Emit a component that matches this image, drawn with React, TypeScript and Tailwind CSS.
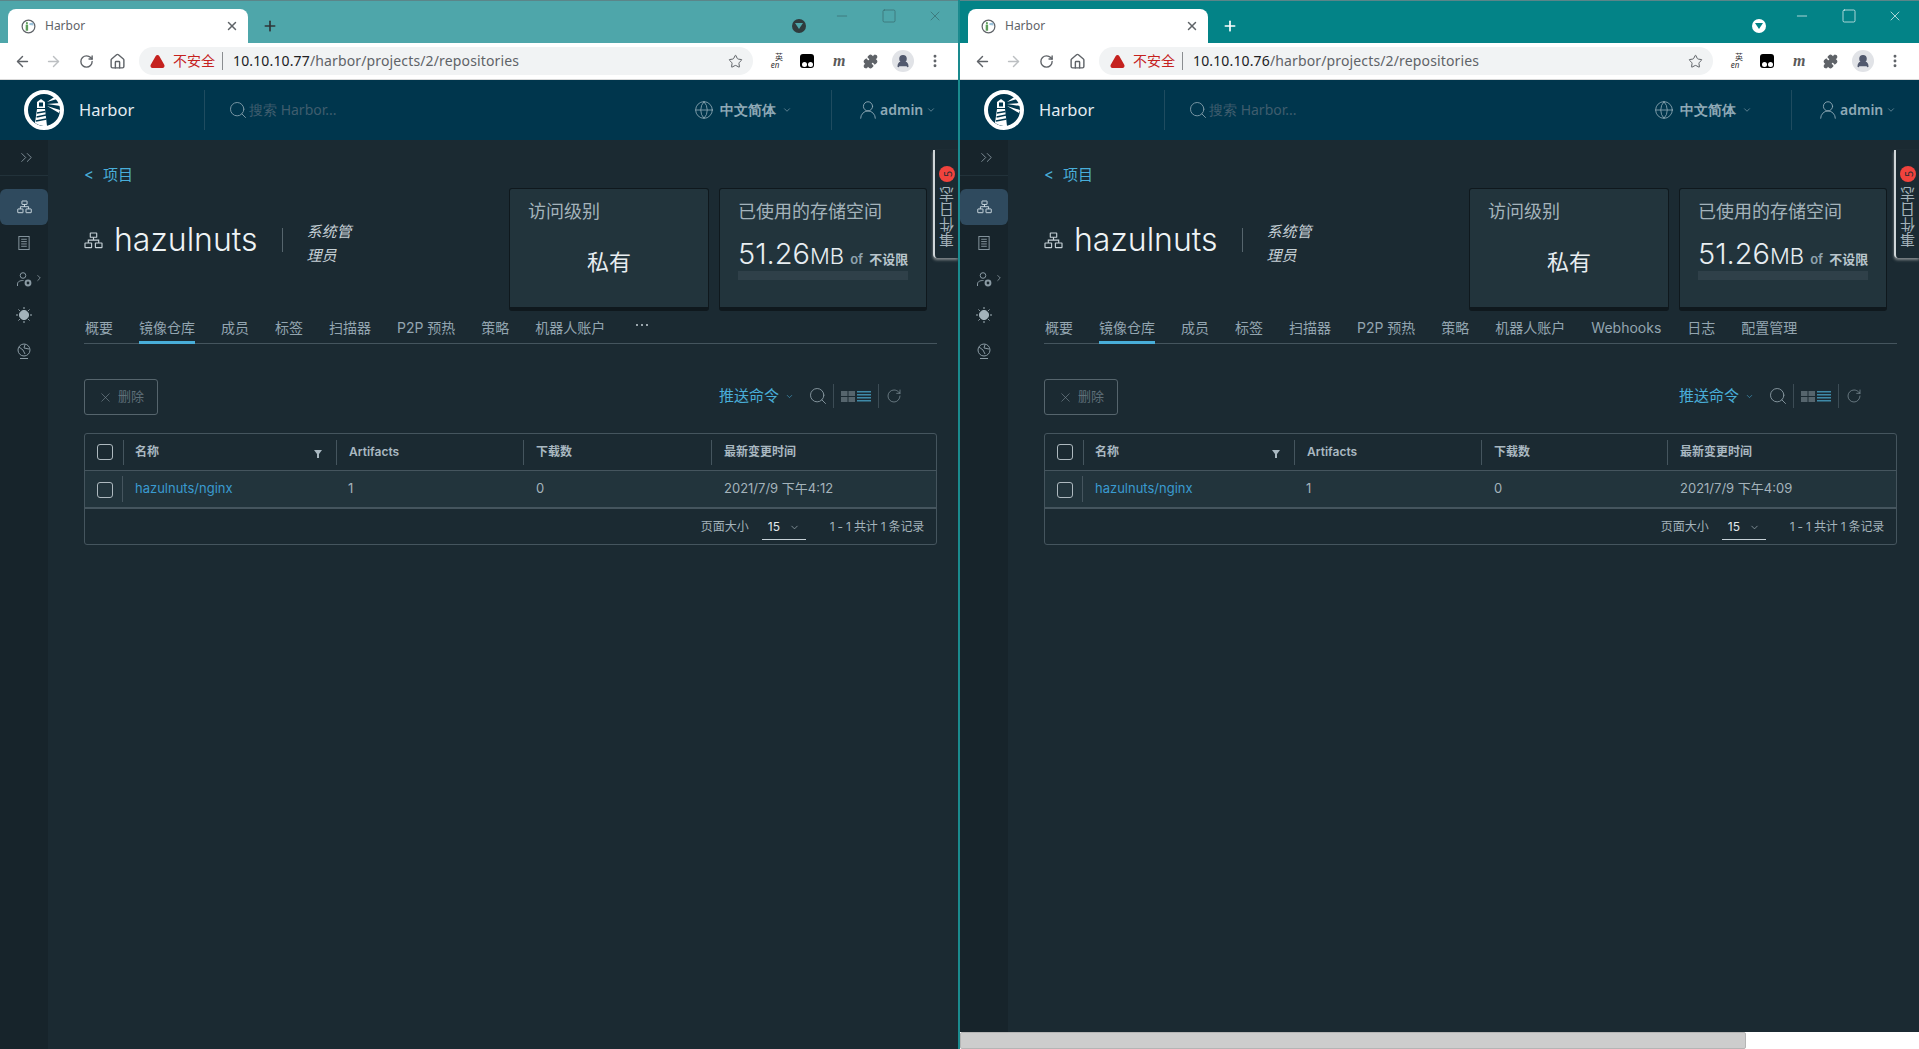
import { ChevronDown, ChevronRight, ChevronsRight, Globe, Minus, Plus, RotateCw, Search, Square, Star, UserRound, X, ArrowLeft, ArrowRight, Home, EllipsisVertical, Puzzle, TriangleAlert } from "lucide-react";

const BASE_TABS = ["概要", "镜像仓库", "成员", "标签", "扫描器", "P2P 预热", "策略", "机器人账户"];

const ProjectIcon = ({ className }: { className: string }) => (
	<svg viewBox="0 0 20 18" fill="none" stroke="currentColor" strokeWidth="1.2" className={className}>
		<rect x="6.6" y="1" width="6.8" height="4.6" rx="0.4" />
		<rect x="1" y="11.6" width="7" height="5" rx="0.4" />
		<rect x="12" y="11.6" width="7" height="5" rx="0.4" />
		<path d="M10 5.6v3M4.5 11.6V8.6h11v3" />
	</svg>
);

const HarborLogo = () => (
	<svg viewBox="0 0 40 40" className="h-10 w-10 shrink-0">
		<circle cx="20" cy="20" r="18" fill="#00364d" stroke="#fff" strokeWidth="4" />
		<path d="M11 33 L13 19 H21 L23 36 A17 17 0 0 1 11 33Z" fill="#fff" />
		<path d="M13 18 V12 L17 9 L21 12 V18Z" fill="#fff" />
		<rect x="15" y="12.5" width="4" height="4" fill="#00364d" />
		<path d="M13 23 L21.5 21.5 M12.6 27 L22 25 M12 31 L22.5 29" stroke="#00364d" strokeWidth="1.3" />
		<path d="M23 12 L31 6.5 L33 9 Z M23 14 L36 13 L36.5 16 Z M23 16 L36 20 L35 23 Z" fill="#fff" />
	</svg>
);

const Favicon = () => (
	<svg viewBox="0 0 16 16" className="h-[15px] w-[15px] shrink-0">
		<circle cx="8" cy="8" r="6.8" fill="#fff" stroke="#5f6368" strokeWidth="1.3" />
		<rect x="5" y="6" width="2.6" height="6.5" fill="#5e9e5a" />
		<circle cx="6.3" cy="4.4" r="1.1" fill="#5e9e5a" />
		<path d="M8.8 4.5 L13 3.6 L13.4 7 L9 6.4Z" fill="#9cc3dc" />
	</svg>
);

type ChromeProps = { ip: string; tint: string; tintIcon: string; controlColor: string; plusColor: string };

function BrowserChrome({ ip, tint, tintIcon, controlColor, plusColor }: ChromeProps) {
	return (
		<div className="shrink-0 font-['Noto_Sans','Noto_Sans_CJK_SC',sans-serif]">
			<div className={`flex h-[43px] items-end border-t border-[#5b8589] pl-2 ${tint}`}>
				<div className="flex h-[34px] w-[240px] items-center rounded-t-lg bg-white pl-[13px] pr-[9px]">
					<Favicon />
					<span className="ml-[9px] flex-1 text-xs text-[#5f6368]">Harbor</span>
					<X size={14} strokeWidth={2.5} className="text-[#5f6368]" />
				</div>
				<div className="mb-[8px] ml-[13px] flex h-[18px] w-[18px] items-center justify-center">
					<Plus size={16} strokeWidth={2.5} className={plusColor} />
				</div>
				<div className="mb-[10px] ml-[513px] flex h-[14px] w-[14px] items-center justify-center rounded-full">
					<div className={`flex h-[14px] w-[14px] items-center justify-center rounded-full ${tintIcon}`}>
						<svg viewBox="0 0 8 6" className="h-[6px] w-[8px]"><path d="M0 0h8L4 6z" fill="currentColor" /></svg>
					</div>
				</div>
				<div className={`mb-[19px] ml-[28px] flex gap-[30px] ${controlColor}`}>
					<Minus size={16} strokeWidth={1} />
					<Square size={16} strokeWidth={1} className="ml-px" />
					<X size={16} strokeWidth={1} />
				</div>
			</div>
			<div className="flex h-[37px] items-center border-b border-[#d9d9d9] bg-white pl-[14px]">
				<ArrowLeft size={17} strokeWidth={2} className="text-[#5f6368]" />
				<ArrowRight size={17} strokeWidth={2} className="ml-[14px] text-[#bcbfc2]" />
				<RotateCw size={15} strokeWidth={2.2} className="ml-[17px] text-[#5f6368]" />
				<Home size={17} strokeWidth={2} className="ml-[15px] text-[#5f6368]" />
				<div className="ml-[13px] flex h-7 w-[614px] items-center rounded-full bg-[#f1f3f4] pl-[11px] pr-[10px]">
					<TriangleAlert size={15} strokeWidth={2.5} className="fill-[#c5221f] text-[#c5221f]" />
					<span className="ml-2 text-sm text-[#c5221f]">不安全</span>
					<span className="ml-[7px] h-[18px] w-px bg-[#8a8d90]" />
					<span className="ml-[10px] flex-1 text-sm tracking-[0.14px] text-[#5f6368]">
						<span className="text-[#202124]">{ip}</span>/harbor/projects/2/repositories
					</span>
					<Star size={15} strokeWidth={1.6} className="text-[#5f6368]" />
				</div>
				<div className="ml-[14px] flex w-[16px] flex-col items-center text-[8px] leading-[8px] text-[#333]">
					<span className="self-end">英</span>
					<span className="italic">en</span>
				</div>
				<div className="ml-[17px] flex h-[14px] w-[14px] items-end justify-center gap-px rounded-[3px] bg-black pb-[1px]">
					<span className="h-[5px] w-[5px] rounded-full bg-white" />
					<span className="h-[5px] w-[5px] rounded-full bg-white" />
				</div>
				<span className="ml-[19px] font-['Liberation_Serif',serif] text-base font-bold italic text-[#5a5a5a]">m</span>
				<Puzzle size={15} className="ml-[18px] fill-[#5f6368] text-[#5f6368]" />
				<div className="ml-[14px] flex h-[22px] w-[22px] items-center justify-center overflow-hidden rounded-full bg-[#e1e3e7]">
					<UserRound size={14} strokeWidth={3} className="fill-[#50586d] text-[#50586d]" />
				</div>
				<EllipsisVertical size={16} strokeWidth={2.4} className="ml-[13px] text-[#5f6368]" />
			</div>
		</div>
	);
}

function Sidebar() {
	return (
		<aside className="flex w-12 shrink-0 flex-col bg-[#17242b] text-[#8a9aa3]">
			<div className="flex h-[36px] items-center justify-center border-b border-[#22323a] pl-[5px]">
				<ChevronsRight size={19} strokeWidth={1.1} />
			</div>
			<div className="mt-[13px] flex h-9 items-center justify-center rounded-md bg-[#2f4a5e] text-[#d6e2e8]">
				<ProjectIcon className="h-[14px] w-[15px]" />
			</div>
			<div className="flex h-9 items-center justify-center">
				<svg viewBox="0 0 12 15" fill="none" stroke="currentColor" className="h-[14px] w-[12px]">
					<rect x="0.5" y="0.5" width="11" height="14" />
					<path d="M3 3.5h6M3 6h6M3 8.5h6M3 11h6" />
				</svg>
			</div>
			<div className="relative flex h-9 items-center justify-center">
				<svg viewBox="0 0 15 15" fill="none" stroke="currentColor" className="h-[15px] w-[15px]">
					<circle cx="6" cy="3.5" r="2.8" />
					<path d="M0.5 14 V12 C0.5 9.5 3 8.5 6.5 8.5" />
					<circle cx="11" cy="11" r="2.4" strokeWidth="2" />
				</svg>
				<ChevronRight size={10} strokeWidth={1.6} className="absolute right-[4px] top-[12px] text-[#a3b2ba]" />
			</div>
			<div className="flex h-9 items-center justify-center">
				<svg viewBox="0 0 16 16" className="h-4 w-4 fill-current stroke-current text-[#a3b2ba]">
					<circle cx="8" cy="8" r="4.6" />
					<path d="M8 0v2M8 14v2M0 8h2M14 8h2M2.5 2.5l1.3 1.3M12.2 12.2l1.3 1.3M2.5 13.5l1.3-1.3M12.2 3.8l1.3-1.3" fill="none" />
				</svg>
			</div>
			<div className="flex h-9 items-center justify-center">
				<svg viewBox="0 0 14 16" fill="none" stroke="currentColor" className="h-4 w-[14px]">
					<circle cx="7" cy="7" r="6" />
					<path d="M2 4l4 3 2 4M8 1.5L7 5l5 1M3 15.5h8" />
				</svg>
			</div>
		</aside>
	);
}

function AppHeader() {
	return (
		<header className="flex h-[60px] shrink-0 items-center bg-[#00364d] pl-6">
			<HarborLogo />
			<span className="ml-[15px] w-[125px] text-[16.5px] text-[#e3edf2]">Harbor</span>
			<span className="h-10 w-px bg-[#1f4c60]" />
			<Search size={20} strokeWidth={1.2} className="ml-[23px] text-[#7895a3]" />
			<span className="ml-[1px] w-[445px] text-sm text-[#3f5d6e]">搜索 Harbor...</span>
			<Globe size={20} strokeWidth={1} className="text-[#8fa9b6]" />
			<span className="ml-[6px] text-sm font-semibold text-[#8fa9b6]">中文简体</span>
			<ChevronDown size={10} strokeWidth={1.5} className="ml-[6px] text-[#8fa9b6]" />
			<span className="ml-[39px] h-10 w-px bg-[#1f4c60]" />
			<UserRound size={22} strokeWidth={1} className="ml-[25px] text-[#8fa9b6]" />
			<span className="ml-[1px] text-sm font-semibold text-[#8fa9b6]">admin</span>
			<ChevronDown size={10} strokeWidth={1.5} className="ml-[3px] text-[#8fa9b6]" />
		</header>
	);
}

function SummaryCards() {
	return (
		<div className="flex gap-[10px]">
			<div className="h-[123px] w-[200px] rounded-[3px] border border-b-4 border-[#0f181d] bg-[#22343c] pl-[18px] pt-[11px]">
				<div className="text-lg leading-6 text-[#a4b3bb]">访问级别</div>
				<div className="mt-[24px] pr-[18px] text-center text-[22px] leading-7 text-[#e8eef1]">私有</div>
			</div>
			<div className="h-[123px] w-[208px] rounded-[3px] border border-b-4 border-[#0f181d] bg-[#22343c] px-[18px] pt-[11px]">
				<div className="text-lg leading-6 text-[#a4b3bb]">已使用的存储空间</div>
				<div className="mt-[8px] flex h-[36px] items-baseline whitespace-nowrap text-[#e8eef1]">
					<span className="text-[29px] font-light">51.26</span>
					<span className="text-[22px] font-light">MB</span>
					<span className="ml-[6px] text-[13px] font-semibold text-[#8fa3af]">of</span>
					<span className="ml-[6px] text-[13px] font-semibold text-[#b9c6cd]">不设限</span>
				</div>
				<div className="mt-[3px] h-[9px] w-[170px] bg-[#2f4049]" />
			</div>
		</div>
	);
}

function Toolbar() {
	return (
		<div className="mt-[35px] flex h-9 w-[853px] items-center justify-between">
			<div className="flex h-9 w-[74px] items-center justify-center gap-[5px] rounded-[3px] border border-[#56656d] text-[13px] text-[#5f6f78]">
				<X size={15} strokeWidth={1} className="text-[#7a8992]" />
				<span>删除</span>
			</div>
			<div className="mb-[2px] mr-[35px] flex items-center text-[#8a9aa3]">
				<span className="text-[15px] text-[#49aed9]">推送命令</span>
				<ChevronDown size={9} strokeWidth={1.5} className="ml-[6px] text-[#49aed9]" />
				<Search size={20} strokeWidth={1.1} className="ml-[14px]" />
				<span className="ml-[5px] h-6 w-px bg-[#3c4c55]" />
				<div className="ml-[7px] flex items-center gap-[2px]">
					<svg viewBox="0 0 14 11" className="h-[11px] w-[14px] fill-[#56656d]">
						<rect width="6.5" height="5" />
						<rect x="7.5" width="6.5" height="5" />
						<rect y="6" width="6.5" height="5" />
						<rect x="7.5" y="6" width="6.5" height="5" />
					</svg>
					<svg viewBox="0 0 14 11" className="h-[11px] w-[14px] fill-[#3f8aa8]">
						<rect width="14" height="1.5" />
						<rect y="3" width="14" height="1.5" />
						<rect y="6" width="14" height="1.5" />
						<rect y="9" width="14" height="1.5" />
					</svg>
				</div>
				<span className="ml-[7px] h-6 w-px bg-[#3c4c55]" />
				<RotateCw size={16} strokeWidth={1} className="ml-[7px]" />
			</div>
		</div>
	);
}

const Checkbox = () => <div className="h-4 w-4 rounded-[3px] border border-[#aeb9bf]" />;

type TableProps = { time: string; nameCol: string; artCol: string; countCol: string };

function RepoTable({ time, nameCol, artCol, countCol }: TableProps) {
	return (
		<div className="mt-[18px] flex h-[112px] w-[853px] flex-col rounded-[3px] border border-[#45555e] text-[#a4b3bb]">
			<div className="flex h-[37px] shrink-0 items-center border-b border-[#45555e] text-xs font-semibold text-[#a9b8c1]">
				<div className="flex h-[25px] w-[39px] shrink-0 items-center justify-center border-r border-[#45555e] pl-px">
					<Checkbox />
				</div>
				<div className={`relative flex h-[25px] shrink-0 items-center border-r border-[#45555e] pl-[11px] ${nameCol}`}>
					名称
					<svg viewBox="0 0 8 8" className="absolute right-[14px] top-[10px] h-2 w-2 fill-[#a9b8c1]"><path d="M0 0h8L5 4v4H3V4z" /></svg>
				</div>
				<div className={`flex h-[25px] shrink-0 items-center border-r border-[#45555e] pl-3 ${artCol}`}>Artifacts</div>
				<div className={`flex h-[25px] shrink-0 items-center border-r border-[#45555e] pl-3 ${countCol}`}>下载数</div>
				<div className="pl-3">最新变更时间</div>
			</div>
			<div className="flex h-[38px] shrink-0 items-center border-b-2 border-[#45555e] bg-[#22343c] text-[13px]">
				<div className="flex h-[26px] w-[38px] shrink-0 items-center justify-center border-r border-[#45555e] pl-[2px] pt-[2px]">
					<Checkbox />
				</div>
				<div className={`ml-px shrink-0 pl-[11px] text-[#3a9bd0] ${nameCol}`}>hazulnuts/nginx</div>
				<div className={`shrink-0 pl-[11px] ${artCol}`}>1</div>
				<div className={`shrink-0 pl-3 ${countCol}`}>0</div>
				<div className="pl-3">{time}</div>
			</div>
			<div className="flex flex-1 items-center justify-end pr-3 text-xs text-[#a4b3bb]">
				<span>页面大小</span>
				<div className="ml-[13px] flex h-[27px] w-[44px] items-center border-b border-[#c5d0d6] pl-[6px] pt-[2px] text-[#e3e9ec]">
					<span>15</span>
					<ChevronDown size={11} strokeWidth={1.5} className="ml-[9px] text-[#a4b3bb]" />
				</div>
				<span className="ml-[24px] tracking-[-0.2px]">1 - 1 共计 1 条记录</span>
			</div>
		</div>
	);
}

type WindowProps = ChromeProps & {
	time: string;
	tabs: string[];
	showMore: boolean;
	nameCol: string;
	artCol: string;
	countCol: string;
	width: string;
	scrollbar: boolean;
};

function BrowserWindow({ ip, time, tint, tintIcon, controlColor, plusColor, tabs, showMore, nameCol, artCol, countCol, width, scrollbar }: WindowProps) {
	return (
		<div className={`relative flex h-full shrink-0 flex-col overflow-hidden bg-[#1b2a32] ${width}`}>
			<BrowserChrome ip={ip} tint={tint} tintIcon={tintIcon} controlColor={controlColor} plusColor={plusColor} />
			<AppHeader />
			<div className="relative flex min-h-0 flex-1">
				<Sidebar />
				<main className="min-w-0 flex-1 pl-9 font-['Inter','Noto_Sans_CJK_SC',sans-serif]">
					<div className="flex h-[48px] items-start pt-[23px] text-[15px] leading-[24px] text-[#49aed9]">
						<span className="w-[19px]">&lt;</span>
						<span>项目</span>
					</div>
					<div className="flex h-[123px] w-[843px] items-start justify-between">
						<div className="flex items-start pt-[32px]">
							<ProjectIcon className="mt-[12px] h-[17px] w-[19px] text-[#c6d0d6]" />
							<span className="ml-[11px] text-[32px] font-light leading-10 text-[#eef3f5]">hazulnuts</span>
							<span className="ml-6 mt-2 h-6 w-px bg-[#56656d]" />
							<div className="ml-6 w-[46px] text-[15px] italic leading-6 text-[#c6d0d6]">系统管理员</div>
						</div>
						<SummaryCards />
					</div>
					<nav className="flex h-[33px] w-[853px] items-stretch gap-[26px] border-b border-[#45555e] pl-px text-sm text-[#93a5b0]">
						{tabs.map((tab, i) => (
							<div
								key={tab}
								className={`flex h-[33px] items-center whitespace-nowrap border-b-[3px] pt-1 ${i === 1 ? "border-[#49aed9]" : "border-transparent"}`}
							>
								{tab}
							</div>
						))}
						{showMore && (
							<div className="flex items-center gap-[3px] pb-[4px] pl-[5px]">
								<span className="h-[2px] w-[2px] rounded-full bg-[#c6d0d6]" />
								<span className="h-[2px] w-[2px] rounded-full bg-[#c6d0d6]" />
								<span className="h-[2px] w-[2px] rounded-full bg-[#c6d0d6]" />
							</div>
						)}
					</nav>
					<Toolbar />
					<RepoTable time={time} nameCol={nameCol} artCol={artCol} countCol={countCol} />
				</main>
				{/* 事件日志 tab hanging on the right edge */}
				<div className="absolute right-0 top-[10px] flex h-[108px] w-[25px] flex-col items-center rounded-bl-sm border-l-2 border-[#d0d6d9] bg-[#1b2a32] shadow-[0_2px_3px_rgba(200,200,200,0.6)] font-['Noto_Sans_CJK_SC',sans-serif]">
					<div className="mt-4 flex h-4 w-4 -rotate-90 items-center justify-center rounded-full bg-[#f0433d] text-[11px] leading-none text-[#1b2a32]">5</div>
					<div className="mt-[5px] rotate-180 text-[15px] leading-4 text-[#a4b3bb] [writing-mode:vertical-rl]">事件日志</div>
				</div>
			</div>
			{scrollbar && (
				<div className="h-[17px] w-full shrink-0 bg-white">
					<div className="h-full w-[786px] rounded-[2px] border border-[#b5b5b5] bg-[#cdcdcd]" />
				</div>
			)}
		</div>
	);
}

export default function App() {
	return (
		<div className="flex h-[1049px] w-[1919px] overflow-hidden bg-[#1b2a32]">
			<BrowserWindow
				ip="10.10.10.77"
				time="2021/7/9 下午4:12"
				tint="bg-[#4ea6aa]"
				tintIcon="bg-[#2f3b3d] text-[#4ea6aa]"
				controlColor="text-[#37666a]"
				plusColor="text-[#2f3437]"
				tabs={BASE_TABS}
				showMore
				nameCol="w-[213px]"
				artCol="w-[187px]"
				countCol="w-[188px]"
				width="w-[958px]"
				scrollbar={false}
			/>
			<div className="h-full w-[2px] shrink-0 bg-[#1a8a8e]" />
			<BrowserWindow
				ip="10.10.10.76"
				time="2021/7/9 下午4:09"
				tint="bg-[#038387]"
				tintIcon="bg-white text-[#038387]"
				controlColor="text-white"
				plusColor="text-white"
				tabs={[...BASE_TABS, "Webhooks", "日志", "配置管理"]}
				showMore={false}
				nameCol="w-[211px]"
				artCol="w-[187px]"
				countCol="w-[186px]"
				width="w-[959px]"
				scrollbar
			/>
		</div>
	);
}
